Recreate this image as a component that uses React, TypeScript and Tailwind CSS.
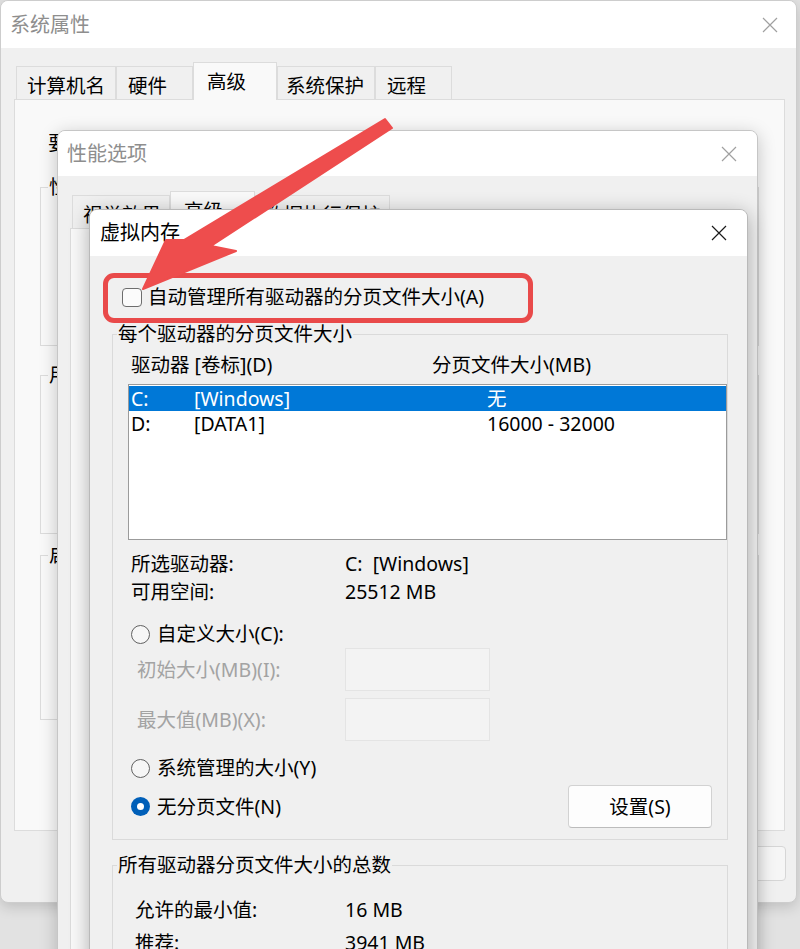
import React from "react";

const font = "font-['Noto_Sans','Noto_Sans_CJK_SC',sans-serif]";

function CloseIcon({ className }: { className: string }) {
  return (
    <svg width="16" height="16" viewBox="0 0 16 16" className={className}>
      <path d="M1 1L15 15M15 1L1 15" stroke="currentColor" strokeWidth="1.2" />
    </svg>
  );
}

function Radio({ checked }: { checked?: boolean }) {
  if (checked) {
    return (
      <span className="flex h-[19px] w-[19px] shrink-0 items-center justify-center rounded-full bg-[#005fb8]">
        <span className="h-[7px] w-[7px] rounded-full bg-white" />
      </span>
    );
  }
  return <span className="h-[19px] w-[19px] shrink-0 rounded-full border border-[#616161] bg-[#f6f6f6]" />;
}

function TitleBar({ title, active, pl, pr, h }: { title: string; active?: boolean; pl: string; pr: string; h: string }) {
  return (
    <div className={`flex shrink-0 items-center justify-between bg-white ${h} ${pl} ${pr}`}>
      <span className={active ? "text-[20px] text-black" : "text-[20px] text-[#8e8e8e]"}>{title}</span>
      <CloseIcon className={active ? "text-[#1a1a1a]" : "text-[#a0a0a0]"} />
    </div>
  );
}

const backTabs = [
  { label: "计算机名", w: "w-[100px] pl-[10px]" },
  { label: "硬件", w: "w-[77px] pl-[11px]" },
  { label: "高级", w: "w-[84px] pl-[13px]", active: true },
  { label: "系统保护", w: "w-[98px] pl-[8px]" },
  { label: "远程", w: "w-[77px] pl-[11px]" },
];

const midTabs = [
  { label: "视觉效果", w: "w-[98px] pl-[10px]" },
  { label: "高级", w: "w-[85px] pl-[13px]", active: true },
  { label: "数据执行保护", w: "w-[135px] pl-[8px]" },
];

function Tab({ label, w, active }: { label: string; w: string; active?: boolean }) {
  return active ? (
    <div className={`relative z-10 -mb-px flex h-[38px] items-start border border-b-0 border-[#dcdcdc] bg-[#f9f9f9] pt-[4px] text-[19.5px] ${w}`}>
      {label}
    </div>
  ) : (
    <div className={`flex h-[33px] items-start border border-b-0 border-[#dcdcdc] bg-[#f0f0f0] pt-[4px] text-[19.5px] ${w}`}>
      {label}
    </div>
  );
}

function Group({ label, className }: { label: string; className: string }) {
  return (
    <fieldset className={`border border-[#dcdcdc] ${className}`}>
      <legend className="ml-[7px] px-px text-[19.5px] leading-[26px]">{label}</legend>
    </fieldset>
  );
}

export default function App() {
  return (
    <div className={`relative isolate h-[949px] w-[800px] overflow-hidden bg-[#e2e2e2] text-black ${font}`}>
      {/* 系统属性 */}
      <div className="absolute left-0 top-0 z-[1] flex h-[903px] w-[797px] flex-col overflow-hidden rounded-[8px] border border-[#cdcdcd] bg-[#f0f0f0] shadow-[0_4px_14px_rgba(0,0,0,0.16)]">
        <TitleBar title="系统属性" pl="pl-[9px]" pr="pr-[18px]" h="h-[47px]" />
        <div className="flex h-[51px] shrink-0 items-end pl-[15px]">
          {backTabs.map((t) => (
            <Tab key={t.label} {...t} />
          ))}
        </div>
        <div className="ml-[13px] flex h-[732px] w-[771px] shrink-0 flex-col border border-[#dcdcdc] bg-[#f9f9f9] px-[25px]">
          <div className="ml-[8px] mt-[30px] h-[26px] text-[19.5px] leading-[26px]">要进行大多数更改，你必须作为管理员登录。</div>
          <Group label="性能" className="mt-[18px] h-[172px]" />
          <Group label="用户配置文件" className="mt-[16px] h-[172px]" />
          <Group label="启动和故障恢复" className="mt-[8px] h-[178px]" />
        </div>
        <div className="flex justify-end gap-[12px] pr-[10px] pt-[15px]">
          {["确定", "取消", "应用(A)"].map((b, i) => (
            <div
              key={b}
              className={
                i === 2
                  ? "flex h-[35px] w-[140px] items-center justify-center rounded-[4px] border border-[#d6d6d6] bg-[#f6f6f6] text-[19.5px] text-[#a0a0a0]"
                  : "flex h-[35px] w-[110px] items-center justify-center rounded-[4px] border border-[#d0d0d0] bg-[#fbfbfb] text-[19.5px]"
              }
            >
              {b}
            </div>
          ))}
        </div>
      </div>

      {/* 性能选项 */}
      <div className="absolute left-[57px] top-[130px] z-[2] flex h-[840px] w-[701px] flex-col overflow-hidden rounded-[8px] border border-[#c6c6c6] bg-[#f0f0f0] shadow-[0_4px_18px_rgba(0,0,0,0.22)]">
        <TitleBar title="性能选项" pl="pl-[9px]" pr="pr-[20px]" h="h-[45px]" />
        <div className="flex h-[52px] shrink-0 items-end pl-[14px]">
          {midTabs.map((t) => (
            <Tab key={t.label} {...t} />
          ))}
        </div>
        <div className="ml-[12px] mr-[12px] flex-1 border border-[#dcdcdc] bg-[#f9f9f9]" />
      </div>

      {/* 虚拟内存 */}
      <div className="absolute left-[89px] top-[209px] z-[3] flex h-[780px] w-[659px] flex-col overflow-hidden rounded-t-[8px] border border-[#b9b9b9] bg-[#f0f0f0] text-[19.5px] shadow-[0_4px_20px_rgba(0,0,0,0.3)]">
        <TitleBar title="虚拟内存" active pl="pl-[10px]" pr="pr-[20px]" h="h-[46px]" />
        <div className="flex flex-col pl-[22px] pr-[19px] pt-[24px]">
          <div className="flex h-[34px] items-center gap-[6px] pl-[10px]">
            <span className="h-[19px] w-[20px] rounded-[4px] border border-[#6d6d6d] bg-[#fbfbfb]" />
            <span>自动管理所有驱动器的分页文件大小(A)</span>
          </div>

          <fieldset className="mt-[7px] flex flex-col border border-[#dadada] pb-[11px]">
            <legend className="ml-[4px] px-px leading-[26px]">每个驱动器的分页文件大小</legend>
            <div className="mt-[5px] flex h-[26px] items-center pl-[18px]">
              <span className="w-[301px]">驱动器 [卷标](D)</span>
              <span>分页文件大小(MB)</span>
            </div>
            <div className="ml-[15px] mt-[6px] h-[156px] w-[599px] border border-[#9b9b9b] bg-white pt-px">
              <div className="flex h-[25px] items-center bg-[#0078d7] pl-[2px] text-white">
                <span className="w-[63px]">C:</span>
                <span className="w-[293px]">[Windows]</span>
                <span>无</span>
              </div>
              <div className="flex h-[25px] items-center pl-[2px]">
                <span className="w-[63px]">D:</span>
                <span className="w-[293px]">[DATA1]</span>
                <span>16000 - 32000</span>
              </div>
            </div>
            <div className="mt-[10px] flex h-[28px] items-center pl-[18px]">
              <span className="w-[214px]">所选驱动器:</span>
              <span>C:&nbsp;&nbsp;[Windows]</span>
            </div>
            <div className="flex h-[28px] items-center pl-[18px]">
              <span className="w-[214px]">可用空间:</span>
              <span>25512 MB</span>
            </div>
            <div className="mt-[14px] flex h-[28px] items-center gap-[7px] pl-[18px]">
              <Radio />
              <span>自定义大小(C):</span>
            </div>
            <div className="flex h-[43px] items-center pl-[18px] text-[#a3a3a3]">
              <span className="w-[214px] pl-[6px]">初始大小(MB)(I):</span>
              <span className="h-[43px] w-[145px] border border-[#e4e4e4] bg-[#f3f3f3]" />
            </div>
            <div className="mt-[7px] flex h-[43px] items-center pl-[18px] text-[#a3a3a3]">
              <span className="w-[214px] pl-[6px]">最大值(MB)(X):</span>
              <span className="h-[43px] w-[145px] border border-[#e4e4e4] bg-[#f3f3f3]" />
            </div>
            <div className="mt-[13px] flex h-[28px] items-center gap-[7px] pl-[18px]">
              <Radio />
              <span>系统管理的大小(Y)</span>
            </div>
            <div className="mt-[3px] flex h-[43px] items-center pl-[18px]">
              <div className="flex flex-1 items-center gap-[7px]">
                <Radio checked />
                <span>无分页文件(N)</span>
              </div>
              <div className="mr-[15px] flex h-[43px] w-[144px] items-center justify-center rounded-[4px] border border-[#d2d2d2] border-b-[#bcbcbc] bg-[#fdfdfd]">
                设置(S)
              </div>
            </div>
          </fieldset>

          <fieldset className="mt-[12px] flex h-[200px] flex-col border border-[#dadada]">
            <legend className="ml-[4px] px-px leading-[26px]">所有驱动器分页文件大小的总数</legend>
            <div className="mt-[18px] flex h-[28px] items-center pl-[22px]">
              <span className="w-[210px]">允许的最小值:</span>
              <span>16 MB</span>
            </div>
            <div className="mt-[5px] flex h-[28px] items-center pl-[22px]">
              <span className="w-[210px]">推荐:</span>
              <span>3941 MB</span>
            </div>
          </fieldset>
        </div>
      </div>

      {/* 标注 */}
      <div className="pointer-events-none absolute left-[103px] top-[273px] z-[4] h-[50px] w-[430px] rounded-[11px] border-[5px] border-[#e94a4a]" />
      <svg className="pointer-events-none absolute left-0 top-0 z-[5]" width="800" height="949" viewBox="0 0 800 949">
        <polygon
          points="385,119 392,128 211,246 236,251 143,289 166,240 184,240"
          fill="#ee4d4d"
          stroke="#ee4d4d"
          strokeWidth="2"
          strokeLinejoin="round"
        />
      </svg>
    </div>
  );
}
